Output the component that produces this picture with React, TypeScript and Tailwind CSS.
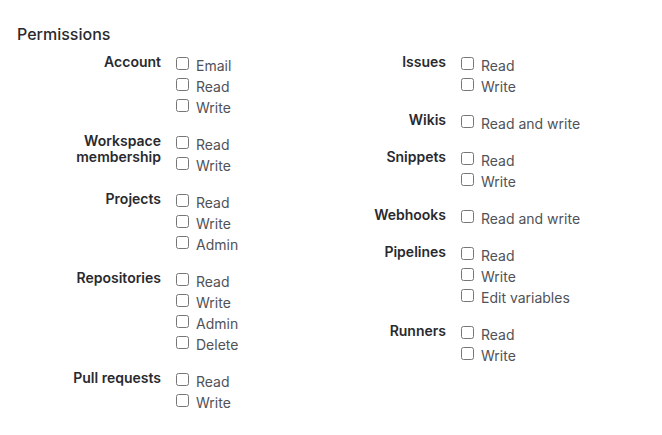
const left = [
  { label: 'Account', options: ['Email', 'Read', 'Write'] },
  { label: 'Workspace membership', options: ['Read', 'Write'] },
  { label: 'Projects', options: ['Read', 'Write', 'Admin'] },
  { label: 'Repositories', options: ['Read', 'Write', 'Admin', 'Delete'] },
  { label: 'Pull requests', options: ['Read', 'Write'] },
]

const right = [
  { label: 'Issues', options: ['Read', 'Write'] },
  { label: 'Wikis', options: ['Read and write'] },
  { label: 'Snippets', options: ['Read', 'Write'] },
  { label: 'Webhooks', options: ['Read and write'] },
  { label: 'Pipelines', options: ['Read', 'Write', 'Edit variables'] },
  { label: 'Runners', options: ['Read', 'Write'] },
]

type Group = { label: string; options: string[] }

function PermissionGroup({ group }: { group: Group }) {
  return (
    <div className="flex gap-[15px]">
      <div className="w-[144px] shrink-0 text-right text-sm leading-4 font-semibold text-[#292a2e]">
        {group.label === 'Workspace membership' ? (
          <>
            Workspace
            <br />
            membership
          </>
        ) : (
          group.label
        )}
      </div>
      <div className="flex flex-col">
        {group.options.map((opt) => (
          <label key={opt} className="flex items-center h-[21px] gap-[7px] text-sm text-[#505258]">
            <input type="checkbox" className="m-0 w-[13px] h-[13px] -translate-y-[1px]" />
            <span className="leading-[21px] translate-y-[1px]">{opt}</span>
          </label>
        ))}
      </div>
    </div>
  )
}

export default function App() {
  return (
    <div className="w-[662px] h-[435px] bg-white pl-[17px] pt-[24px]" style={{ fontFamily: 'Inter, "Noto Sans", sans-serif' }}>
      <h2 className="text-base leading-5 font-medium text-[#292a2e]">Permissions</h2>
      <div className="flex mt-[10px]">
        <div className="w-[285px] flex flex-col gap-4">
          {left.map((g) => (
            <PermissionGroup key={g.label} group={g} />
          ))}
        </div>
        <div className="flex flex-col gap-4">
          {right.map((g) => (
            <PermissionGroup key={g.label} group={g} />
          ))}
        </div>
      </div>
    </div>
  )
}
